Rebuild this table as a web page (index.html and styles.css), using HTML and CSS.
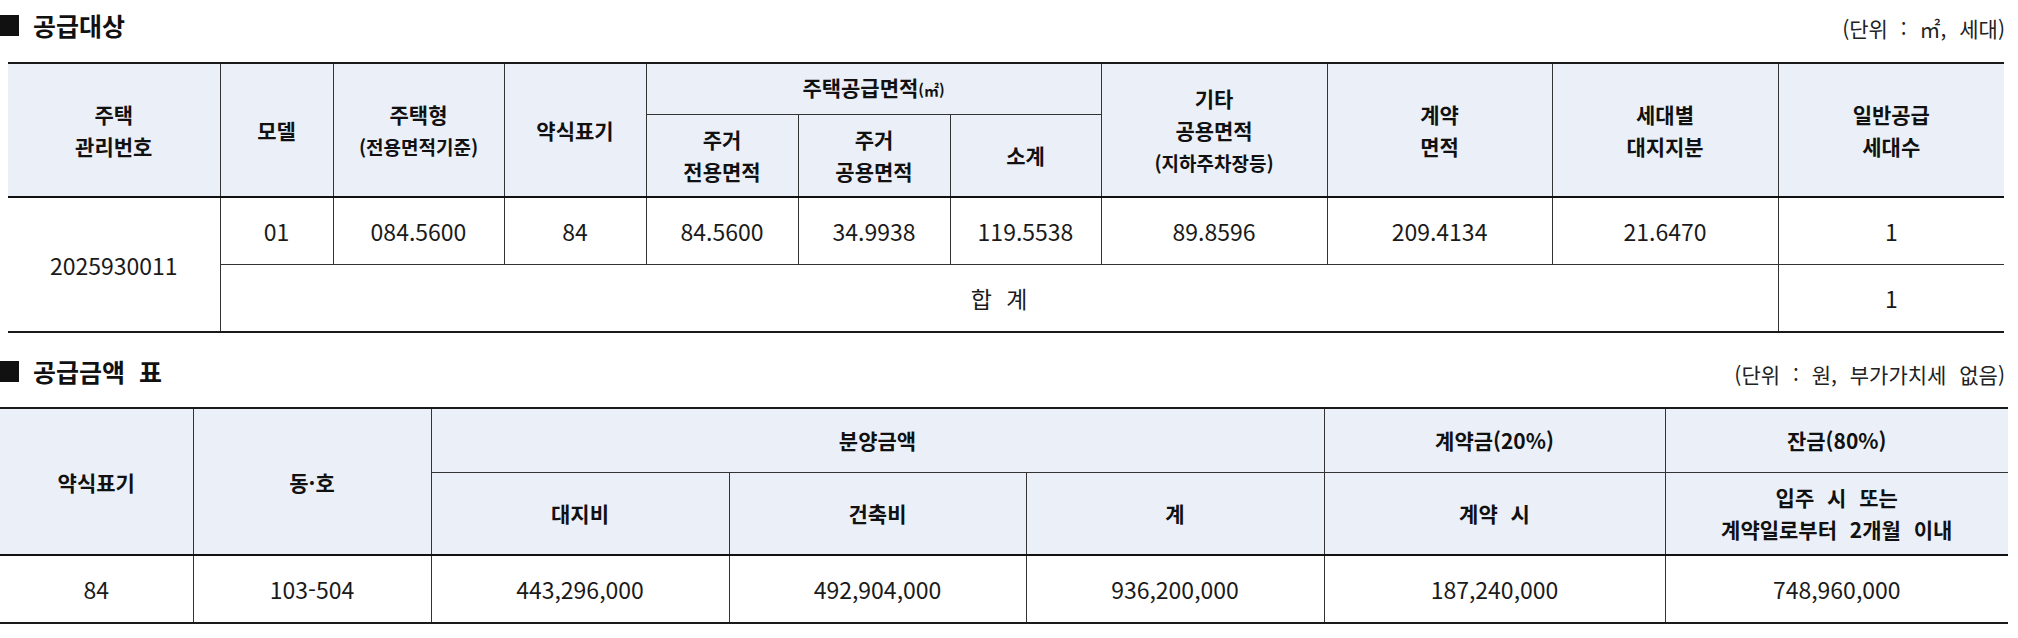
FILE: index.html
```html
<!DOCTYPE html>
<html lang="ko">
<head>
<meta charset="utf-8">
<title>공급대상</title>
<link rel="stylesheet" href="styles.css">
</head>
<body>
<div class="page">
  <div class="title-row first">
    <div class="title"><span class="square"></span><span>공급대상</span></div>
    <div class="unit spaced">(단위 : ㎡, 세대)</div>
  </div>
  <table class="grid t1">
    <colgroup>
      <col class="w212"><col class="w113"><col class="w171"><col class="w142"><col class="w152"><col class="w152"><col class="w151"><col class="w226"><col class="w225"><col class="w226"><col class="w226">
    </colgroup>
    <thead>
      <tr class="h1">
        <th rowspan="2">주택<br>관리번호</th>
        <th rowspan="2">모델</th>
        <th rowspan="2">주택형<br><span class="sub">(전용면적기준)</span></th>
        <th rowspan="2">약식표기</th>
        <th colspan="3">주택공급면적<span class="tiny">(㎡)</span></th>
        <th rowspan="2">기타<br>공용면적<br><span class="sub">(지하주차장등)</span></th>
        <th rowspan="2">계약<br>면적</th>
        <th rowspan="2">세대별<br>대지지분</th>
        <th rowspan="2">일반공급<br>세대수</th>
      </tr>
      <tr class="h2">
        <th>주거<br>전용면적</th>
        <th>주거<br>공용면적</th>
        <th>소계</th>
      </tr>
    </thead>
    <tbody>
      <tr>
        <td rowspan="2">2025930011</td>
        <td>01</td>
        <td>084.5600</td>
        <td>84</td>
        <td>84.5600</td>
        <td>34.9938</td>
        <td>119.5538</td>
        <td>89.8596</td>
        <td>209.4134</td>
        <td>21.6470</td>
        <td>1</td>
      </tr>
      <tr>
        <td colspan="9" class="sum">합 계</td>
        <td>1</td>
      </tr>
    </tbody>
  </table>

  <div class="title-row second">
    <div class="title"><span class="square"></span><span class="spaced">공급금액 표</span></div>
    <div class="unit spaced">(단위 : 원, 부가가치세 없음)</div>
  </div>
  <table class="grid t2">
    <colgroup>
      <col class="w193"><col class="w238"><col class="w298"><col class="w297"><col class="w298"><col class="w341"><col class="w343">
    </colgroup>
    <thead>
      <tr class="h1">
        <th rowspan="2">약식표기</th>
        <th rowspan="2">동·호</th>
        <th colspan="3">분양금액</th>
        <th>계약금(20%)</th>
        <th>잔금(80%)</th>
      </tr>
      <tr class="h2">
        <th>대지비</th>
        <th>건축비</th>
        <th>계</th>
        <th class="spaced">계약 시</th>
        <th class="spaced tight">입주 시 또는<br>계약일로부터 2개월 이내</th>
      </tr>
    </thead>
    <tbody>
      <tr>
        <td>84</td>
        <td>103-504</td>
        <td>443,296,000</td>
        <td>492,904,000</td>
        <td>936,200,000</td>
        <td>187,240,000</td>
        <td>748,960,000</td>
      </tr>
    </tbody>
  </table>
</div>
</body>
</html>
```

FILE: styles.css
```css
html, body {
  margin: 0;
  padding: 0;
  background: #ffffff;
}

body {
  font-family: "Noto Sans CJK KR", "Noto Sans", sans-serif;
  color: #111111;
}

.page {
  width: 2018px;
}

.title-row {
  display: flex;
  justify-content: space-between;
  align-items: center;
  height: 50px;
  padding-right: 13px;
}

.title-row.first {
  margin-bottom: 12px;
}

.title-row.second {
  margin-top: 13px;
  margin-bottom: 11px;
}

.title {
  display: flex;
  align-items: center;
  gap: 14px;
  font-size: 25px;
  font-weight: 700;
  color: #111111;
}

.square {
  display: block;
  width: 19px;
  height: 21px;
  background: #111111;
}

.unit {
  font-size: 21px;
  color: #222222;
  padding-top: 6px;
}

.spaced {
  word-spacing: 7px;
}

.grid {
  border-collapse: collapse;
  table-layout: fixed;
  border-top: 2px solid #1a1a1a;
  border-bottom: 2px solid #1a1a1a;
  border-left: hidden;
  border-right: hidden;
}

.t1 {
  width: 1996px;
  margin-left: 8px;
}

.t2 {
  width: 2008px;
}

.grid th,
.grid td {
  border: 1px solid #333333;
  padding: 0;
  text-align: center;
  vertical-align: middle;
}

.grid th {
  background: #ebf0f8;
  font-size: 21px;
  font-weight: 700;
  line-height: 32px;
  color: #111111;
}

.grid td {
  font-size: 23px;
  font-weight: 400;
  color: #1a1a1a;
  height: 66px;
}

.grid tbody tr:first-child td {
  border-top: 2px solid #111111;
}

.t1 .h1 {
  height: 51px;
}

.t1 .h2 {
  height: 83px;
}

.t2 .h1 {
  height: 64px;
}

.t2 .h2 {
  height: 83px;
}

.sub {
  font-size: 19px;
}

.tiny {
  font-size: 15px;
}

.tight {
  line-height: 30px;
}

.sum {
  word-spacing: 8px;
}

.w212 { width: 212px; }
.w113 { width: 113px; }
.w171 { width: 171px; }
.w142 { width: 142px; }
.w152 { width: 152px; }
.w151 { width: 151px; }
.w226 { width: 226px; }
.w225 { width: 225px; }
.w193 { width: 193px; }
.w238 { width: 238px; }
.w298 { width: 298px; }
.w297 { width: 297px; }
.w341 { width: 341px; }
.w343 { width: 343px; }
```
